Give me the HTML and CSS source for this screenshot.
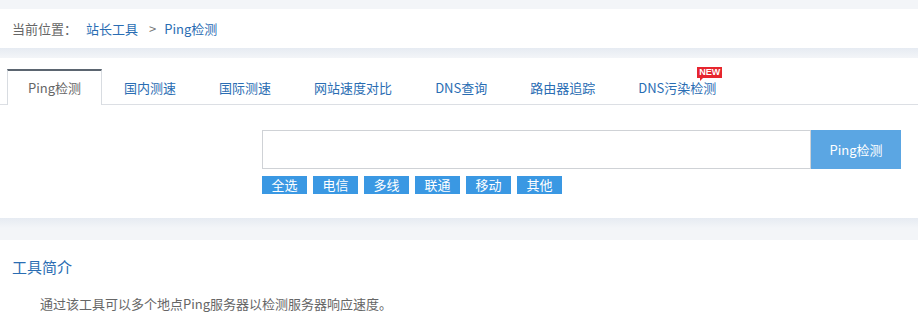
FILE: index.html
```html
<!DOCTYPE html>
<html lang="zh-CN">
<head>
    <meta charset="UTF-8">
    <title>Ping检测</title>
    <link rel="stylesheet" href="styles.css">
</head>
<body>

    <!-- 面包屑 -->
    <div class="card crumb">
        <span class="crumb-label">当前位置：</span>
        <a href="#">站长工具</a>
        <span class="crumb-sep">&gt;</span>
        <a href="#">Ping检测</a>
    </div>

    <!-- 工具 -->
    <div class="card tool">
        <ul class="tabs">
            <li class="tab active">Ping检测</li>
            <li class="tab">国内测速</li>
            <li class="tab">国际测速</li>
            <li class="tab">网站速度对比</li>
            <li class="tab">DNS查询</li>
            <li class="tab">路由器追踪</li>
            <li class="tab">DNS污染检测<span class="badge">NEW</span></li>
        </ul>

        <div class="search">
            <div class="search-row">
                <input type="text" class="search-input">
                <button class="search-btn">Ping检测</button>
            </div>
            <div class="lines">
                <span class="line">全选</span>
                <span class="line">电信</span>
                <span class="line">多线</span>
                <span class="line">联通</span>
                <span class="line">移动</span>
                <span class="line">其他</span>
            </div>
        </div>
    </div>

    <!-- 工具简介 -->
    <div class="card intro">
        <h3>工具简介</h3>
        <p>通过该工具可以多个地点Ping服务器以检测服务器响应速度。</p>
    </div>

</body>
</html>
```

FILE: styles.css
```css
body {
    font-family: "Microsoft YaHei", "Noto Sans CJK SC", sans-serif;
    font-size: 13px;
    background-color: #f3f5f8;
    margin: 0;
    padding: 9px 0 0;
    color: #555;
}
a {
    color: #2a6db3;
    text-decoration: none;
}
.card {
    background-color: #fff;
    position: relative;
}
.card::after {
    content: "";
    position: absolute;
    left: 0;
    right: 0;
    bottom: -10px;
    height: 10px;
    background: linear-gradient(#e6ebf2, #f3f5f8);
}

.crumb {
    height: 39px;
    display: flex;
    align-items: center;
    padding-left: 12px;
    margin-bottom: 10px;
}
.crumb-label {
    color: #666;
    margin-right: 9px;
}
.crumb-sep {
    color: #777;
    margin: 0 8px 0 11px;
}

.tool {
    padding-top: 11px;
    height: 149px;
    margin-bottom: 22px;
}
.tabs {
    list-style: none;
    margin: 0;
    padding: 0 0 0 7px;
    display: flex;
    border-bottom: 1px solid #dcdfe4;
    height: 35px;
}
.tab {
    position: relative;
    padding: 0 20px 0 21px;
    border: 1px solid transparent;
    border-top-width: 2px;
    border-bottom: none;
    line-height: 34px;
    color: #2a6db3;
}
.tab.active {
    padding: 0 20px;
    color: #666;
    background-color: #fff;
    border-color: #d8dce1;
    border-top-color: #5b6570;
    height: 34px;
}
.badge {
    position: absolute;
    top: -4px;
    right: 14px;
    background-color: #e6262e;
    color: #fff;
    font-family: Arial, "Liberation Sans", sans-serif;
    font-size: 9px;
    font-weight: bold;
    line-height: 11px;
    padding: 0 2px;
}
.badge::after {
    content: "";
    position: absolute;
    left: 3px;
    bottom: -3px;
    border-left: 3px solid #e6262e;
    border-bottom: 3px solid transparent;
}

.search {
    padding: 25px 0 0 262px;
}
.search-row {
    display: flex;
}
.search-input {
    width: 549px;
    height: 39px;
    box-sizing: border-box;
    border: 1px solid #cfd2d6;
    margin: 0;
    outline: none;
}
.search-btn {
    width: 90px;
    height: 39px;
    border: none;
    background-color: #5ba6e3;
    color: #fff;
    font-family: inherit;
    font-size: 13px;
    cursor: pointer;
}
.lines {
    display: flex;
    gap: 6px;
    margin-top: 7px;
}
.line {
    width: 45px;
    height: 18px;
    line-height: 18px;
    text-align: center;
    background-color: #3a98e3;
    color: #fff;
}

.intro {
    padding: 16px 12px 0;
    height: 73px;
}
.intro::after {
    display: none;
}
.intro h3 {
    margin: 0;
    font-size: 15px;
    font-weight: normal;
    color: #2a6db3;
}
.intro p {
    margin: 17px 0 0 28px;
    color: #666;
}
```
